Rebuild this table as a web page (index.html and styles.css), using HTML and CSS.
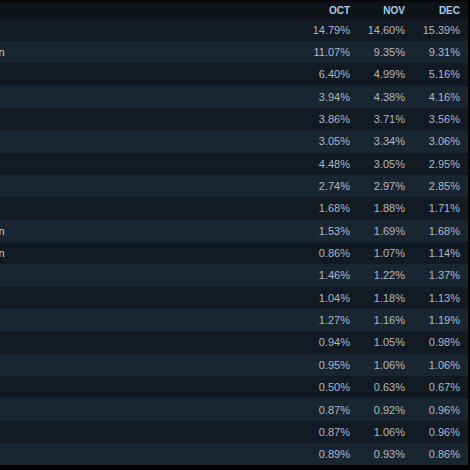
FILE: index.html
```html
<!DOCTYPE html>
<html>
<head>
<meta charset="utf-8">
<link rel="stylesheet" href="styles.css">
</head>
<body>
<div class="viewport">
  <div class="table">
    <div class="row head">
      <div class="name"></div>
      <div class="val">OCT</div>
      <div class="val">NOV</div>
      <div class="val">DEC</div>
    </div>
    <div class="row odd"><div class="name"></div><div class="val">14.79%</div><div class="val">14.60%</div><div class="val">15.39%</div></div>
    <div class="row even"><div class="name">Russian</div><div class="val">11.07%</div><div class="val">9.35%</div><div class="val">9.31%</div></div>
    <div class="row odd"><div class="name"></div><div class="val">6.40%</div><div class="val">4.99%</div><div class="val">5.16%</div></div>
    <div class="row even"><div class="name"></div><div class="val">3.94%</div><div class="val">4.38%</div><div class="val">4.16%</div></div>
    <div class="row odd"><div class="name"></div><div class="val">3.86%</div><div class="val">3.71%</div><div class="val">3.56%</div></div>
    <div class="row even"><div class="name"></div><div class="val">3.05%</div><div class="val">3.34%</div><div class="val">3.06%</div></div>
    <div class="row odd"><div class="name"></div><div class="val">4.48%</div><div class="val">3.05%</div><div class="val">2.95%</div></div>
    <div class="row even"><div class="name"></div><div class="val">2.74%</div><div class="val">2.97%</div><div class="val">2.85%</div></div>
    <div class="row odd"><div class="name"></div><div class="val">1.68%</div><div class="val">1.88%</div><div class="val">1.71%</div></div>
    <div class="row even"><div class="name">Russian</div><div class="val">1.53%</div><div class="val">1.69%</div><div class="val">1.68%</div></div>
    <div class="row odd"><div class="name">Russian</div><div class="val">0.86%</div><div class="val">1.07%</div><div class="val">1.14%</div></div>
    <div class="row even"><div class="name"></div><div class="val">1.46%</div><div class="val">1.22%</div><div class="val">1.37%</div></div>
    <div class="row odd"><div class="name"></div><div class="val">1.04%</div><div class="val">1.18%</div><div class="val">1.13%</div></div>
    <div class="row even"><div class="name"></div><div class="val">1.27%</div><div class="val">1.16%</div><div class="val">1.19%</div></div>
    <div class="row odd"><div class="name"></div><div class="val">0.94%</div><div class="val">1.05%</div><div class="val">0.98%</div></div>
    <div class="row even"><div class="name"></div><div class="val">0.95%</div><div class="val">1.06%</div><div class="val">1.06%</div></div>
    <div class="row odd"><div class="name"></div><div class="val">0.50%</div><div class="val">0.63%</div><div class="val">0.67%</div></div>
    <div class="row even"><div class="name"></div><div class="val">0.87%</div><div class="val">0.92%</div><div class="val">0.96%</div></div>
    <div class="row odd"><div class="name"></div><div class="val">0.87%</div><div class="val">1.06%</div><div class="val">0.96%</div></div>
    <div class="row even"><div class="name"></div><div class="val">0.89%</div><div class="val">0.93%</div><div class="val">0.86%</div></div>
  </div>
</div>
</body>
</html>
```

FILE: styles.css
```css
html, body {
  margin: 0;
  padding: 0;
  background: #000;
}
.viewport {
  width: 470px;
  height: 470px;
  overflow: hidden;
  background: #000;
}
.table {
  margin-left: -43px;
  width: 511px;
  font-family: "Liberation Sans", Arial, sans-serif;
  font-size: 11px;
  color: #aeb7c2;
}
.row {
  display: grid;
  grid-template-columns: 1fr 55px 55px 55px;
  padding-right: 8px;
  height: 22.35px;
  align-items: center;
  box-sizing: border-box;
}
.row.head {
  height: 18.5px;
  border-top: 2px solid #07090b;
  background: #0e1318;
  color: #a6cbe8;
  font-weight: bold;
  font-size: 10px;
  padding-top: 1px;
}
.row.odd { background: #121a24; }
.row.even { background: #1a2532; }
.name {
  padding-left: 8px;
  white-space: nowrap;
  overflow: hidden;
  color: #c6cdd5;
}
.val {
  text-align: right;
  white-space: nowrap;
}
```
